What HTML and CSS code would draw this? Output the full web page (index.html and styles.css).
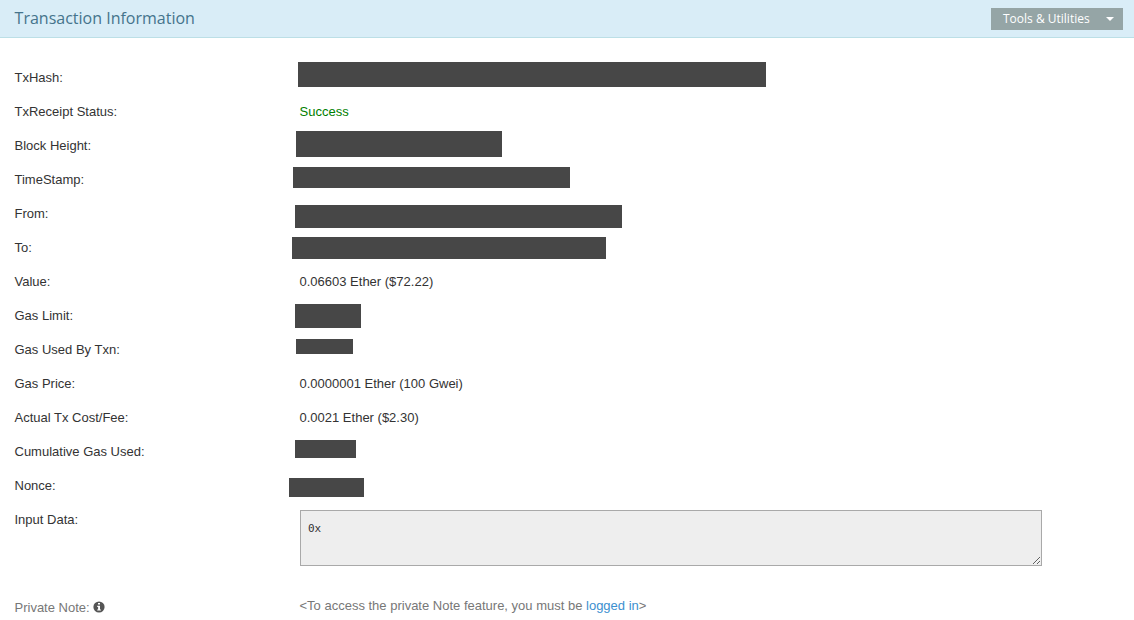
FILE: index.html
```html
<!DOCTYPE html>
<html lang="en">
<head>
  <meta charset="UTF-8" />
  <title>Transaction Information</title>
  <link rel="stylesheet" href="styles.css">
</head>
<body>

  <div class="panel-heading">
    <h3>Transaction Information</h3>
    <button type="button" class="btn-tools"><span class="btn-label">Tools &amp; Utilities</span> <span class="caret"></span></button>
  </div>

  <div class="panel-body">
    <div class="row">
      <div class="label">TxHash:</div>
      <div class="value"><div class="redacted tx-hash"></div></div>
    </div>
    <div class="row">
      <div class="label">TxReceipt Status:</div>
      <div class="value success">Success</div>
    </div>
    <div class="row">
      <div class="label">Block Height:</div>
      <div class="value"><div class="redacted block-height"></div></div>
    </div>
    <div class="row">
      <div class="label">TimeStamp:</div>
      <div class="value"><div class="redacted timestamp"></div></div>
    </div>
    <div class="row">
      <div class="label">From:</div>
      <div class="value"><div class="redacted from"></div></div>
    </div>
    <div class="row">
      <div class="label">To:</div>
      <div class="value"><div class="redacted to"></div></div>
    </div>
    <div class="row">
      <div class="label">Value:</div>
      <div class="value">0.06603 Ether ($72.22)</div>
    </div>
    <div class="row">
      <div class="label">Gas Limit:</div>
      <div class="value"><div class="redacted gas-limit"></div></div>
    </div>
    <div class="row">
      <div class="label">Gas Used By Txn:</div>
      <div class="value"><div class="redacted gas-used"></div></div>
    </div>
    <div class="row">
      <div class="label">Gas Price:</div>
      <div class="value">0.0000001 Ether (100 Gwei)</div>
    </div>
    <div class="row">
      <div class="label">Actual Tx Cost/Fee:</div>
      <div class="value">0.0021 Ether ($2.30)</div>
    </div>
    <div class="row">
      <div class="label">Cumulative Gas Used:</div>
      <div class="value"><div class="redacted cumulative-gas"></div></div>
    </div>
    <div class="row">
      <div class="label">Nonce:</div>
      <div class="value"><div class="redacted nonce"></div></div>
    </div>
    <div class="row input-row">
      <div class="label">Input Data:</div>
      <div class="value"><textarea class="input-data" readonly>0x</textarea></div>
    </div>
    <div class="row note-row">
      <div class="label">Private Note:
        <svg class="info-icon" viewBox="0 0 12 12">
          <circle cx="6" cy="6" r="5.6" fill="#555" />
          <path d="M5 1.9h2v1.7H5zM4.2 4.8H7v3.6h.9v1.2H4.2V8.4h.9V6h-.9z" fill="#fff" />
        </svg>
      </div>
      <div class="value">&lt;To access the private Note feature, you must be <a href="#">logged in</a>&gt;</div>
    </div>
  </div>

</body>
</html>
```

FILE: styles.css
```css
* {
  box-sizing: border-box;
}

body {
  margin: 0;
  font-family: Arial, "Liberation Sans", sans-serif;
  font-size: 13px;
  line-height: 18px;
  color: #333;
  background: #fff;
  overflow: hidden;
}

.panel-heading {
  display: flex;
  justify-content: space-between;
  align-items: flex-start;
  height: 38px;
  padding: 8px 11px 0 14.6px;
  background: #d9edf7;
  border-bottom: 1px solid #bcdfe6;
}

.panel-heading h3 {
  margin: 0;
  font-family: "Open Sans", sans-serif;
  font-size: 16px;
  font-weight: normal;
  line-height: 20px;
  color: #45748c;
}

.btn-tools {
  display: flex;
  justify-content: space-between;
  align-items: center;
  width: 132px;
  height: 22px;
  padding: 0 9px 0 12px;
  border: none;
  background: #95a5a6;
  color: #fff;
  font-family: "Open Sans", sans-serif;
  font-size: 12px;
}

.btn-label {
  padding-bottom: 2px;
}

.caret {
  border-top: 4px solid #fff;
  border-left: 4px solid transparent;
  border-right: 4px solid transparent;
}

.panel-body {
  padding-top: 22px;
}

.row {
  display: flex;
  align-items: flex-start;
  height: 34px;
}

.label {
  width: 285px;
  padding: 9px 0 0 14.5px;
}

.value {
  padding: 9px 0 0 14.5px;
}

.success {
  color: green;
}

/* blocks covering private values */
.redacted {
  background: #474747;
}

.tx-hash {
  width: 468px;
  height: 25px;
  margin: -7px 0 0 -1.5px;
}

.block-height {
  width: 206px;
  height: 26px;
  margin: -6px 0 0 -3.5px;
}

.timestamp {
  width: 277px;
  height: 21px;
  margin: -4px 0 0 -6.5px;
}

.from {
  width: 327px;
  height: 23px;
  margin: 0 0 0 -4.5px;
}

.to {
  width: 314px;
  height: 22px;
  margin: -2px 0 0 -7.5px;
}

.gas-limit {
  width: 66px;
  height: 24px;
  margin: -3px 0 0 -4.5px;
}

.gas-used {
  width: 57px;
  height: 15px;
  margin: -2px 0 0 -3.5px;
}

.cumulative-gas {
  width: 61px;
  height: 18px;
  margin: -3px 0 0 -4.5px;
}

.nonce {
  width: 75px;
  height: 19px;
  margin: 1px 0 0 -10.5px;
}

.input-row {
  height: 86px;
}

.input-data {
  display: block;
  width: 742px;
  height: 56px;
  margin: -1px 0 0 0.5px;
  padding: 9px 7px 7px;
  border: 1px solid #a9a9a9;
  background: #eee;
  color: #333;
  font-family: "DejaVu Sans Mono", monospace;
  font-size: 11px;
  line-height: 18px;
  resize: both;
}

.note-row {
  color: #777;
}

.note-row .label {
  padding-top: 11px;
}

.info-icon {
  width: 12px;
  height: 12px;
  vertical-align: -1px;
}

a {
  color: #3c8fcf;
  text-decoration: none;
}
```
